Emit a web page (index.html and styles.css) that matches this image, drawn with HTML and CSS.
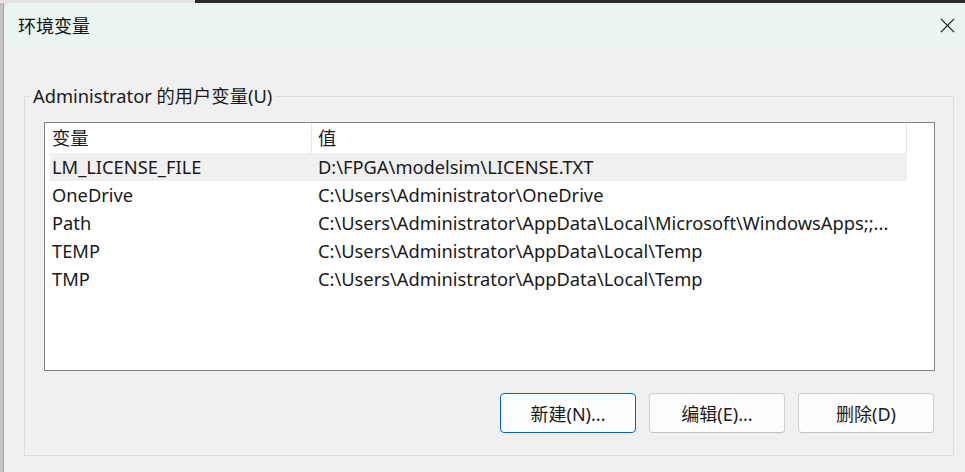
FILE: index.html
```html
<!DOCTYPE html>
<html lang="zh-CN">
<head>
    <meta charset="UTF-8">
    <title>环境变量</title>
    <link rel="stylesheet" href="styles.css">
</head>
<body>

<div class="backdrop-top">
    <div class="bt-light"></div>
    <div class="bt-dark"></div>
</div>

<div class="stage">
    <div class="backdrop-left"></div>

    <div class="dialog">
        <div class="titlebar">
            <span class="title">环境变量</span>
            <button class="close" title="关闭">
                <svg width="16" height="16" viewBox="0 0 16 16">
                    <path d="M1 1 L15 15 M15 1 L1 15" stroke="#1b1b1b" stroke-width="1.3" fill="none"/>
                </svg>
            </button>
        </div>

        <div class="dialog-body">
            <fieldset class="group">
                <legend>Administrator 的用户变量(U)</legend>

                <div class="listview">
                    <div class="lv-header">
                        <div class="col name">变量</div>
                        <div class="col value">值</div>
                    </div>
                    <div class="lv-row selected">
                        <div class="col name">LM_LICENSE_FILE</div>
                        <div class="col value">D:\FPGA\modelsim\LICENSE.TXT</div>
                    </div>
                    <div class="lv-row">
                        <div class="col name">OneDrive</div>
                        <div class="col value">C:\Users\Administrator\OneDrive</div>
                    </div>
                    <div class="lv-row">
                        <div class="col name">Path</div>
                        <div class="col value">C:\Users\Administrator\AppData\Local\Microsoft\WindowsApps;;...</div>
                    </div>
                    <div class="lv-row">
                        <div class="col name">TEMP</div>
                        <div class="col value">C:\Users\Administrator\AppData\Local\Temp</div>
                    </div>
                    <div class="lv-row">
                        <div class="col name">TMP</div>
                        <div class="col value">C:\Users\Administrator\AppData\Local\Temp</div>
                    </div>
                </div>

                <div class="buttons">
                    <button class="btn default">新建(N)...</button>
                    <button class="btn">编辑(E)...</button>
                    <button class="btn">删除(D)</button>
                </div>
            </fieldset>
        </div>
    </div>
</div>

</body>
</html>
```

FILE: styles.css
```css
html, body {
    margin: 0;
    padding: 0;
    height: 100%;
    overflow: hidden;
}
body {
    font-family: "Noto Sans", "Noto Sans CJK SC", sans-serif;
    font-size: 18.3px;
    color: #1a1a1a;
    background: #e6e6e6;
}

/* windows behind the dialog */
.backdrop-top {
    display: flex;
    height: 3px;
}
.bt-light {
    width: 195px;
    background: #e4e4e4;
}
.bt-dark {
    flex: 1;
    background: #2b2b2b;
}
.stage {
    display: flex;
    height: 469px;
}
.backdrop-left {
    width: 4px;
    background: #c4c4c4;
    border-right: 1px solid #a8a8a8;
    box-sizing: border-box;
}

/* dialog */
.dialog {
    width: 961px;
    background: #f0f0f0;
    border-top-left-radius: 8px;
    overflow: hidden;
    display: flex;
    flex-direction: column;
}
.titlebar {
    height: 44px;
    background: #eaf5f2;
    display: flex;
    align-items: center;
    justify-content: space-between;
}
.title {
    font-family: "Noto Sans CJK SC", sans-serif;
    font-size: 18px;
    padding-left: 14px;
    color: #111;
}
.close {
    width: 46px;
    height: 44px;
    border: none;
    background: transparent;
    display: flex;
    align-items: center;
    justify-content: center;
    padding: 0 0 0 10px;
}
.close svg {
    width: 15px;
    height: 15px;
}
.dialog-body {
    flex: 1;
    padding: 0 0 0 20px;
}

/* group box */
.group {
    width: 930px;
    box-sizing: border-box;
    margin: 37px 0 0 0;
    padding: 14px 18px 22px 19px;
    border: 1px solid #dcdcdc;
    min-width: 0;
}
.group legend {
    padding: 0 3px;
    margin-left: -14px;
    line-height: 24px;
}

/* list view */
.listview {
    height: 249px;
    box-sizing: border-box;
    border: 1px solid #7d848c;
    background: #ffffff;
    padding-left: 5px;
}
.lv-header, .lv-row {
    display: grid;
    grid-template-columns: 262px 595px;
    width: 857px;
    white-space: nowrap;
}
.lv-header {
    height: 30px;
    align-items: center;
}
.lv-header .col {
    height: 30px;
    line-height: 30px;
    border-right: 1px solid #e5e5e5;
    box-sizing: border-box;
}
.lv-row {
    height: 28px;
    line-height: 28px;
}
.lv-row.selected {
    background: #f0f0f0;
}
.col {
    overflow: hidden;
}
.col.name {
    padding-left: 2px;
}
.col.value {
    padding-left: 6px;
}

/* buttons */
.buttons {
    display: flex;
    justify-content: flex-end;
    gap: 13px;
    margin-top: 22px;
    padding-right: 1px;
}
.btn {
    width: 136px;
    height: 40px;
    font-family: inherit;
    font-size: 18px;
    color: #1a1a1a;
    background: #fdfdfd;
    border: 1px solid #d0d0d0;
    border-bottom-color: #c2c2c2;
    border-radius: 4px;
}
.btn.default {
    border: 1px solid #0067c0;
}
```
